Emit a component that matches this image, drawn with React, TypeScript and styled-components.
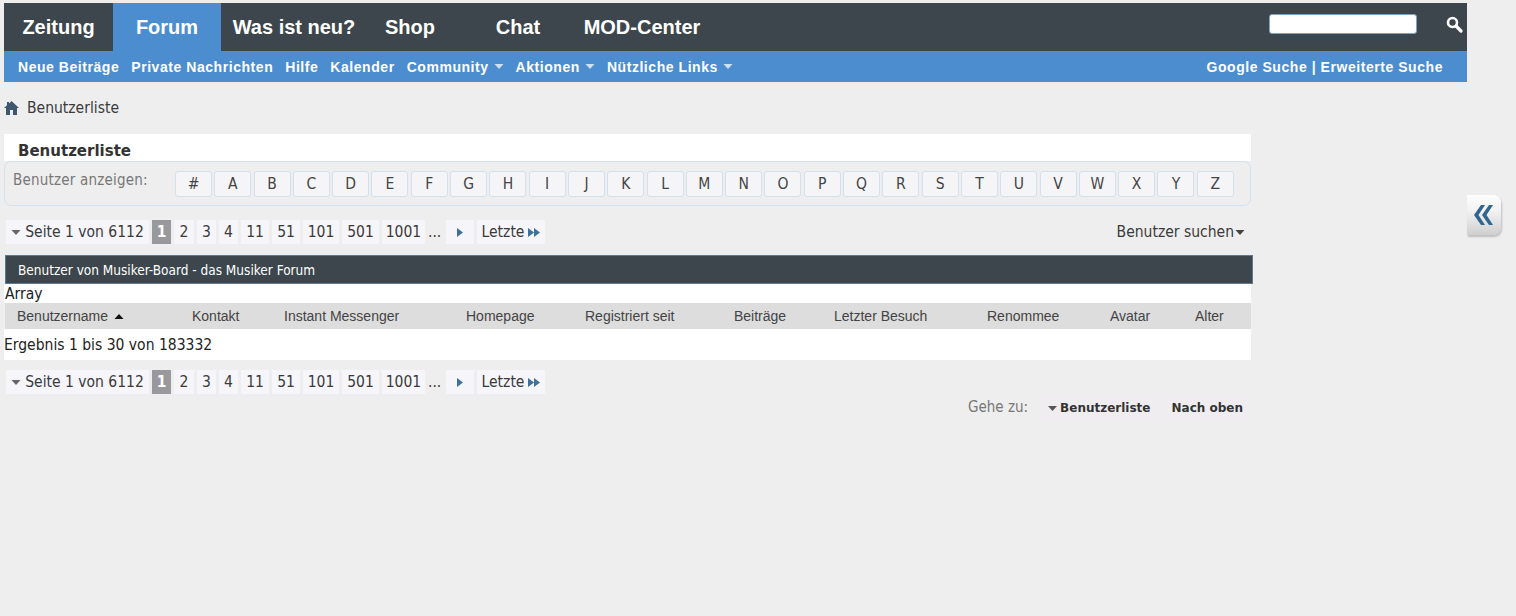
import React from "react";
import styled, { createGlobalStyle } from "styled-components";

const Global = createGlobalStyle`
  html, body { margin: 0; padding: 0; background: #eeeeee; }
  body { font-family: "DejaVu Sans Condensed", "Noto Sans", sans-serif; color: #333; }
`;
const Page = styled.div`
  position: relative;
  height: 616px;
  padding: 3px 49px 0 4px;
  box-sizing: border-box;
  overflow: hidden;
`;
const TopBar = styled.div`
  height: 48px;
  background: #3c464c;
  display: flex;
  align-items: stretch;
`;
const Tab = styled.a<{ $w: number; $active?: boolean }>`
  width: ${(p) => p.$w}px;
  flex: none;
  display: flex;
  align-items: center;
  justify-content: center;
  padding-top: 0;
  font: bold 20px "Liberation Sans", Arial, sans-serif;
  color: #fff;
  background: ${(p) => (p.$active ? "#4b8dcf" : "transparent")};
`;
const SearchArea = styled.div`
  margin-left: auto;
  display: flex;
  align-items: center;
  padding: 0 4px 6px 0;
  gap: 29px;
`;
const SearchInput = styled.input`
  width: 148px;
  height: 20px;
  box-sizing: border-box;
  border: 1px solid #7fa3c2;
  border-radius: 3px;
  background: #fff;
  padding: 0;
`;
const SubBar = styled.div`
  height: 31px;
  background: #4b8dcf;
  display: flex;
  align-items: center;
  padding: 0 24px 0 14px;
  font: bold 14px "Liberation Sans", Arial, sans-serif;
  letter-spacing: 0.55px;
  color: #fff;
`;
const SubLink = styled.a`
  display: inline-flex;
  align-items: center;
  gap: 5px;
  margin-right: 12px;
  white-space: nowrap;
`;
const SubRight = styled.span`
  margin-left: auto;
  white-space: nowrap;
`;
const Crumb = styled.div`
  height: 52px;
  display: flex;
  align-items: center;
  gap: 8px;
  font-size: 15.5px;
  color: #3a3a3a;
`;
const Block = styled.div`
  width: 1247px;
`;
const Title = styled.div`
  height: 27px;
  box-sizing: border-box;
  background: #fff;
  padding: 8px 0 0 14px;
  font: bold 15px/19px "DejaVu Sans", sans-serif;
  color: #333;
`;
const LetterBox = styled.div`
  height: 45px;
  box-sizing: border-box;
  border: 1px solid #d3e0ee;
  border-radius: 7px;
  background: #eeeeee;
  display: flex;
  padding: 9px 0 0 170px;
  position: relative;
  gap: 2.3px;
`;
const LetterLabel = styled.span`
  position: absolute;
  left: 8px;
  top: 9px;
  font-size: 15px;
  letter-spacing: 0.2px;
  color: #777;
`;
const Letter = styled.a`
  width: 37px;
  height: 26px;
  box-sizing: border-box;
  flex: none;
  border: 1px solid #d3e0ee;
  border-radius: 3px;
  background: #f5f5f8;
  display: flex;
  align-items: center;
  justify-content: center;
  font-size: 15.5px;
  color: #444;
`;
const PagerRow = styled.div<{ $top: number }>`
  margin-top: ${(p) => p.$top}px;
  height: 24px;
  display: flex;
  align-items: stretch;
  justify-content: space-between;
  padding: 0 6px 0 2px;
`;
const Pager = styled.div`
  display: flex;
  align-items: stretch;
  font-size: 15.5px;
  color: #3a3a3a;
`;
const PageCell = styled.a<{ $w: number; $gap?: number; $current?: boolean }>`
  width: ${(p) => p.$w}px;
  margin-right: ${(p) => p.$gap ?? 3}px;
  flex: none;
  display: flex;
  align-items: center;
  justify-content: center;
  gap: 4px;
  background: ${(p) => (p.$current ? "#98989d" : "#f5f5fa")};
  color: ${(p) => (p.$current ? "#fff" : "#3a3a3a")};
  font-weight: ${(p) => (p.$current ? "bold" : "normal")};
`;
const Dots = styled.span`
  width: 18px;
  flex: none;
  display: flex;
  align-items: center;
`;
const SearchUsers = styled.a`
  display: flex;
  align-items: center;
  gap: 1px;
  font-size: 15.5px;
  color: #3a3a3a;
`;
const TableHead = styled.div`
  margin-top: 11px;
  height: 29px;
  width: 1248px;
  margin-left: 1px;
  box-sizing: border-box;
  background: #3c464c;
  border: 1px solid #5f7a8f;
  border-width: 1px 1px 1px 1px;
  padding-left: 12px;
  display: flex;
  align-items: center;
  font-size: 13.5px;
  color: #fff;
`;
const ArrayLine = styled.div`
  height: 19px;
  background: #fff;
  padding-left: 1px;
  font-size: 15.5px;
  line-height: 21px;
  color: #222;
`;
const ColumnRow = styled.div`
  height: 26px;
  margin-left: 1px;
  background: #dddddd;
  display: grid;
  grid-template-columns: 175px 92px 182px 119px 149px 100px 153px 123px 85px 1fr;
  padding-left: 12px;
  align-items: center;
  font: 14px "Liberation Sans", Arial, sans-serif;
  color: #444;
`;
const Th = styled.span`
  display: flex;
  align-items: center;
  gap: 6px;
`;
const Result = styled.div`
  height: 31px;
  background: #fff;
  display: flex;
  align-items: center;
  font-size: 15.5px;
  color: #222;
`;
const GotoRow = styled.div`
  margin-top: 2px;
  height: 24px;
  display: flex;
  justify-content: flex-end;
  align-items: stretch;
`;
const GotoLabel = styled.span`
  font-size: 15px;
  color: #777;
  display: flex;
  align-items: center;
  margin-right: 7px;
  padding-bottom: 3px;
`;
const GotoButton = styled.a`
  display: flex;
  align-items: center;
  gap: 3px;
  padding: 0 8px;
  margin-left: 5px;
  background: #f0edf0;
  font: bold 12px "DejaVu Sans", sans-serif;
  color: #333;
`;
const SideTab = styled.div`
  position: absolute;
  left: 1467px;
  top: 195px;
  width: 34px;
  height: 40px;
  box-sizing: border-box;
  border-radius: 0 8px 8px 0;
  background: linear-gradient(#fdfdfd, #f2f2f2 40%, #cfcfcf);
  box-shadow: 1px 2px 2px rgba(0, 0, 0, 0.2);
  display: flex;
  align-items: center;
  justify-content: center;
  padding-right: 3px;
`;
const Caret = ({ c = "#555", up, w = 9 }: { c?: string; up?: boolean; w?: number }) => (
  <svg width={w} height={5} viewBox="0 0 9 5" style={{ flex: "none" }}>
    <path d={up ? "M0 5 4.5 0 9 5z" : "M0 0h9L4.5 5z"} fill={c} />
  </svg>
);
const Home = () => (
  <svg width="15" height="14" viewBox="0 0 15 14">
    <path d="M7.5 0 15 7h-2v7H9V9H6v5H2V7H0L3 4.2V1h2v1.4z" fill="#3e566e" />
  </svg>
);
const Lens = () => (
  <svg width="17" height="17" viewBox="0 0 17 17">
    <circle cx="6.5" cy="6.5" r="4.5" fill="none" stroke="#fff" strokeWidth="2.6" />
    <path d="M10 10l5 5" stroke="#fff" strokeWidth="3.2" strokeLinecap="round" />
  </svg>
);
const Right = () => (
  <svg width="6" height="9" viewBox="0 0 6 9"><path d="M0 0l6 4.5L0 9z" fill="#3f7099" /></svg>
);
const Double = () => (
  <svg width="12" height="9" viewBox="0 0 12 9"><path d="M0 0l6 4.5L0 9zM6 0l6 4.5L6 9z" fill="#3f7099" /></svg>
);
const letters = "#ABCDEFGHIJKLMNOPQRSTUVWXYZ".split("");
const pages: [string, number][] = [["2", 20], ["3", 19], ["4", 19], ["11", 28], ["51", 28], ["101", 36], ["501", 37], ["1001", 43]];

const PagerBar = () => (
  <Pager>
    <PageCell $w={143} $gap={3}><Caret c="#666" w={10} />Seite 1 von 6112</PageCell>
    <PageCell $w={19} $current>1</PageCell>
    {pages.map(([p, w]) => <PageCell key={p} $w={w}>{p}</PageCell>)}
    <Dots>...</Dots>
    <PageCell $w={28} $gap={3}><Right /></PageCell>
    <PageCell $w={68} $gap={0}>Letzte<Double /></PageCell>
  </Pager>
);

export default function App() {
  return (
    <Page>
      <Global />
      <TopBar>
        <Tab $w={109}>Zeitung</Tab>
        <Tab $w={108} $active>Forum</Tab>
        <Tab $w={146}>Was ist neu?</Tab>
        <Tab $w={86}>Shop</Tab>
        <Tab $w={130}>Chat</Tab>
        <Tab $w={118}>MOD-Center</Tab>
        <SearchArea><SearchInput aria-label="Suche" /><Lens /></SearchArea>
      </TopBar>
      <SubBar>
        <SubLink>Neue Beiträge</SubLink>
        <SubLink>Private Nachrichten</SubLink>
        <SubLink>Hilfe</SubLink>
        <SubLink>Kalender</SubLink>
        <SubLink>Community <Caret c="#cfe0f2" w={10} /></SubLink>
        <SubLink>Aktionen <Caret c="#cfe0f2" w={10} /></SubLink>
        <SubLink>Nützliche Links <Caret c="#cfe0f2" w={10} /></SubLink>
        <SubRight>Google Suche | Erweiterte Suche</SubRight>
      </SubBar>
      <Crumb><Home />Benutzerliste</Crumb>
      <Block>
        <Title>Benutzerliste</Title>
        <LetterBox>
          <LetterLabel>Benutzer anzeigen:</LetterLabel>
          {letters.map((l) => <Letter key={l}>{l}</Letter>)}
        </LetterBox>
        <PagerRow $top={14}>
          <PagerBar />
          <SearchUsers>Benutzer suchen<Caret c="#444" w={10} /></SearchUsers>
        </PagerRow>
        <TableHead>Benutzer von Musiker-Board - das Musiker Forum</TableHead>
        <ArrayLine>Array</ArrayLine>
        <ColumnRow>
          <Th>Benutzername <Caret c="#111" w={10} up /></Th>
          <Th>Kontakt</Th>
          <Th>Instant Messenger</Th>
          <Th>Homepage</Th>
          <Th>Registriert seit</Th>
          <Th>Beiträge</Th>
          <Th>Letzter Besuch</Th>
          <Th>Renommee</Th>
          <Th>Avatar</Th>
          <Th>Alter</Th>
        </ColumnRow>
        <Result>Ergebnis 1 bis 30 von 183332</Result>
        <PagerRow $top={10}><PagerBar /></PagerRow>
        <GotoRow>
          <GotoLabel>Gehe zu:</GotoLabel>
          <GotoButton><Caret c="#555" w={9} />Benutzerliste</GotoButton>
          <GotoButton>Nach oben</GotoButton>
        </GotoRow>
      </Block>
      <SideTab>
        <svg width="22" height="22" viewBox="0 0 22 22">
          <path d="M9 1 2 11l7 10h4L6.5 11 13 1zM17 1l-7 10 7 10h4l-6.500-10L21 1z" fill="#2f6690" />
        </svg>
      </SideTab>
    </Page>
  );
}
